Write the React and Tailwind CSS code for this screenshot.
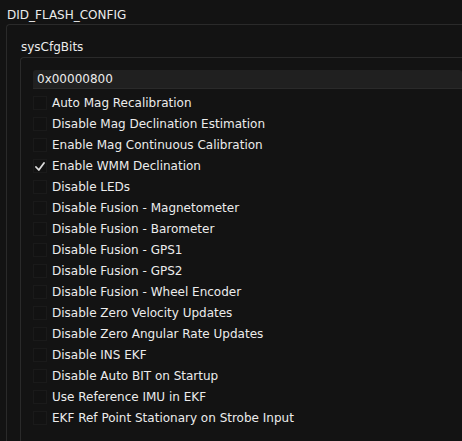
import React from "react";

const items = [
  ["Auto Mag Recalibration", false],
  ["Disable Mag Declination Estimation", false],
  ["Enable Mag Continuous Calibration", false],
  ["Enable WMM Declination", true],
  ["Disable LEDs", false],
  ["Disable Fusion - Magnetometer", false],
  ["Disable Fusion - Barometer", false],
  ["Disable Fusion - GPS1", false],
  ["Disable Fusion - GPS2", false],
  ["Disable Fusion - Wheel Encoder", false],
  ["Disable Zero Velocity Updates", false],
  ["Disable Zero Angular Rate Updates", false],
  ["Disable INS EKF", false],
  ["Disable Auto BIT on Startup", false],
  ["Use Reference IMU in EKF", false],
  ["EKF Ref Point Stationary on Strobe Input", false],
];

export default function App() {
  return (
    <div
      className="w-[462px] h-[441px] overflow-hidden bg-[#131313] text-[#ececec] text-[12px] leading-[14px]"
      style={{ fontFamily: '"DejaVu Sans", sans-serif' }}
    >
      <div className="pl-[7px] pt-[8px] h-[24px]">DID_FLASH_CONFIG</div>
      <div className="ml-[6px] border-l border-t border-[#2a2a2a] rounded-tl-[4px] h-[420px]">
        <div className="pl-[14px] pt-[15px] h-[32px]">sysCfgBits</div>
        <div className="ml-[13px] border-l border-t border-[#2a2a2a] rounded-tl-[4px] h-[400px] pl-[12px] pt-[12px]">
          <div className="h-[19px] bg-[#202020] border-b border-[#2a2a2a] rounded-t-[3px] pl-[4px] flex items-center">
            0x00000800
          </div>
          <div className="flex flex-col pt-[7px]">
            {items.map(([label, checked]) => (
              <div key={label} className="h-[21px] flex items-start gap-[5px]">
                <div className="w-[14px] h-[14px] shrink-0 bg-[#121212] border border-[#1a1a1a] flex items-center justify-center">
                  {checked ? (
                    <svg width="10" height="9" viewBox="0 0 10 9">
                      <path d="M1 5 L3.8 8 L9 1" fill="none" stroke="#dcdcdc" strokeWidth="1.8" strokeLinecap="round" strokeLinejoin="round" />
                    </svg>
                  ) : null}
                </div>
                <div className="leading-[14px]">{label}</div>
              </div>
            ))}
          </div>
        </div>
      </div>
    </div>
  );
}
